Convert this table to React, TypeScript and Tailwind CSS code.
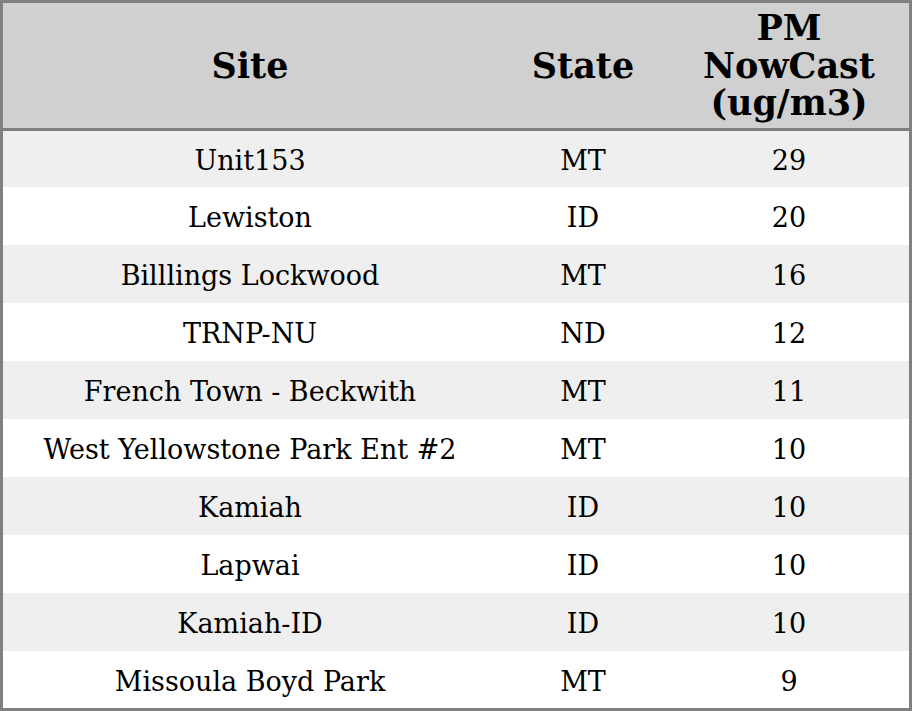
const rows: { site: string; state: string; pm: number }[] = [
  { site: 'Unit153', state: 'MT', pm: 29 },
  { site: 'Lewiston', state: 'ID', pm: 20 },
  { site: 'Billlings Lockwood', state: 'MT', pm: 16 },
  { site: 'TRNP-NU', state: 'ND', pm: 12 },
  { site: 'French Town - Beckwith', state: 'MT', pm: 11 },
  { site: 'West Yellowstone Park Ent #2', state: 'MT', pm: 10 },
  { site: 'Kamiah', state: 'ID', pm: 10 },
  { site: 'Lapwai', state: 'ID', pm: 10 },
  { site: 'Kamiah-ID', state: 'ID', pm: 10 },
  { site: 'Missoula Boyd Park', state: 'MT', pm: 9 },
];

export default function App() {
  return (
    <div className="w-[912px] h-[711px] overflow-hidden bg-white font-['DejaVu_Serif',serif] text-black">
      <div className="border-[3px] border-[#808080]">
        {/* Header */}
        <div className="grid grid-cols-[494px_172px_1fr] h-[128px] bg-[#d0d0d0] border-b-[3px] border-[#808080] text-[35px] font-bold leading-[37.5px] text-center">
          <div className="flex items-center justify-center">Site</div>
          <div className="flex items-center justify-center">State</div>
          <div className="flex items-center justify-center">
            <span>
              PM
              <br />
              NowCast
              <br />
              (ug/m3)
            </span>
          </div>
        </div>

        {/* Rows */}
        {rows.map((r, i) => (
          <div
            key={i}
            className={`grid grid-cols-[494px_172px_1fr] items-center pt-[4px] text-center text-[27px] leading-[32px] ${
              i === 0 ? 'h-[56px]' : i === rows.length - 1 ? 'h-[57px]' : 'h-[58px]'
            } ${i % 2 === 0 ? 'bg-[#efefef]' : 'bg-white'}`}
          >
            <div>{r.site}</div>
            <div>{r.state}</div>
            <div>{r.pm}</div>
          </div>
        ))}
      </div>
    </div>
  );
}
